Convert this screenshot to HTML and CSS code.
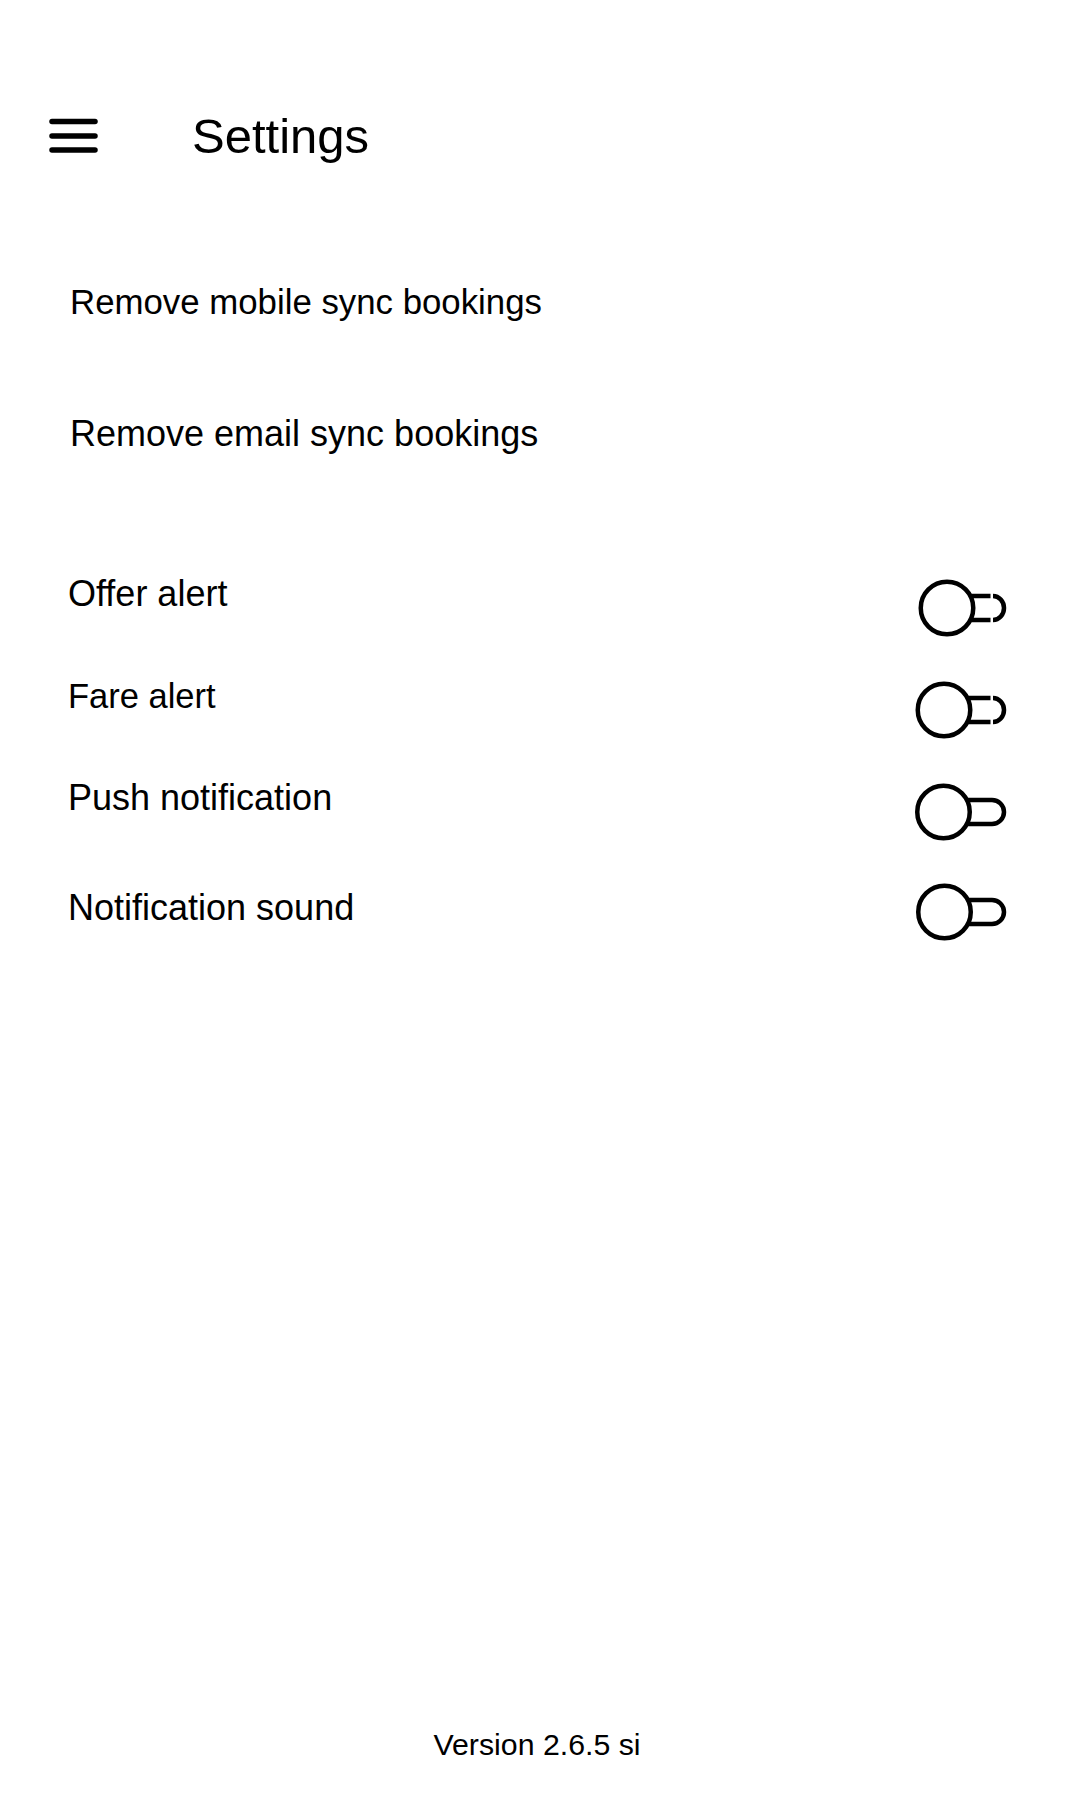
FILE: index.html
```html
<!DOCTYPE html>
<html lang="en">
<head>
<meta charset="utf-8">
<title>Settings</title>
<link rel="stylesheet" href="styles.css">
</head>
<body>
<div class="app">
  <header class="topbar">
    <svg class="menu-icon" width="50" height="36" viewBox="0 0 50 36" aria-hidden="true">
      <g stroke="#000" stroke-width="5.5" stroke-linecap="round">
        <line x1="4" y1="3.5" x2="47" y2="3.5"/>
        <line x1="4" y1="18" x2="47" y2="18"/>
        <line x1="4" y1="32" x2="47" y2="32"/>
      </g>
    </svg>
    <h1 class="title">Settings</h1>
  </header>

  <main class="settings">
    <div class="action text-sm">Remove mobile sync bookings</div>
    <div class="action text-lg">Remove email sync bookings</div>

    <div class="toggles">
      <div class="toggle-row">
        <span class="label text-lg">Offer alert</span>
        <svg class="switch" width="94" height="60" viewBox="0 0 94 60" aria-hidden="true">
          <g fill="none" stroke="#000" stroke-width="4.5">
            <path d="M55 18 H75.5 M55 42 H75.5"/>
            <path d="M78 18 A11 12 0 0 1 78 42"/>
            <circle cx="32" cy="30" r="26.25"/>
          </g>
        </svg>
      </div>
      <div class="toggle-row">
        <span class="label text-xs">Fare alert</span>
        <svg class="switch" width="94" height="60" viewBox="0 0 94 60" aria-hidden="true">
          <g fill="none" stroke="#000" stroke-width="4.5">
            <path d="M53 18 H75.5 M53 42 H75.5"/>
            <path d="M78 18 A11 12 0 0 1 78 42"/>
            <circle cx="29" cy="30" r="26.25"/>
          </g>
        </svg>
      </div>
      <div class="toggle-row">
        <span class="label text-lg">Push notification</span>
        <svg class="switch" width="94" height="60" viewBox="0 0 94 60" aria-hidden="true">
          <g fill="none" stroke="#000" stroke-width="4.5">
            <path d="M52 18 H77 A12 12 0 0 1 77 42 H52"/>
            <circle cx="28.5" cy="30" r="26.25"/>
          </g>
        </svg>
      </div>
      <div class="toggle-row toggle-row--low">
        <span class="label text-lg">Notification sound</span>
        <svg class="switch" width="94" height="60" viewBox="0 0 94 60" aria-hidden="true">
          <g fill="none" stroke="#000" stroke-width="4.5">
            <path d="M53 18 H77 A12 12 0 0 1 77 42 H53"/>
            <circle cx="29.5" cy="30" r="26.25"/>
          </g>
        </svg>
      </div>
    </div>
  </main>

  <footer class="version">Version 2.6.5 si</footer>
</div>
</body>
</html>
```

FILE: styles.css
```css
html, body {
  margin: 0;
  padding: 0;
  background: #fff;
}

body {
  font-family: "Liberation Sans", Arial, sans-serif;
  color: #000;
}

.app {
  min-height: 1800px;
  display: flex;
  flex-direction: column;
}

.topbar {
  display: flex;
  align-items: center;
  gap: 94px;
  padding: 108px 0 0 48px;
}

.menu-icon {
  display: block;
  flex: none;
}

.title {
  margin: 0;
  font-size: 49px;
  font-weight: 400;
  line-height: 56px;
}

.settings {
  margin-top: 72px;
}

.action {
  font-size: 35px;
  line-height: 40px;
  padding: 46px 0 46px 70px;
}

.toggles {
  margin-top: 74px;
  padding: 0 71px 0 68px;
}

.toggle-row {
  display: flex;
  justify-content: space-between;
  align-items: flex-start;
  height: 102px;
}

.label {
  font-size: 35px;
  line-height: 40px;
}

.text-xs {
  font-size: 34.5px;
}

.text-sm {
  font-size: 34.8px;
}

.text-lg {
  font-size: 36px;
}

.switch {
  display: block;
  flex: none;
  margin-top: 4px;
}

.toggle-row--low .label {
  margin-top: 8px;
}

.toggle-row--low .switch {
  margin-top: 2px;
}

.version {
  margin-top: auto;
  text-align: center;
  font-size: 30.3px;
  line-height: 36px;
  padding: 0 6px 37px 0;
}
```
